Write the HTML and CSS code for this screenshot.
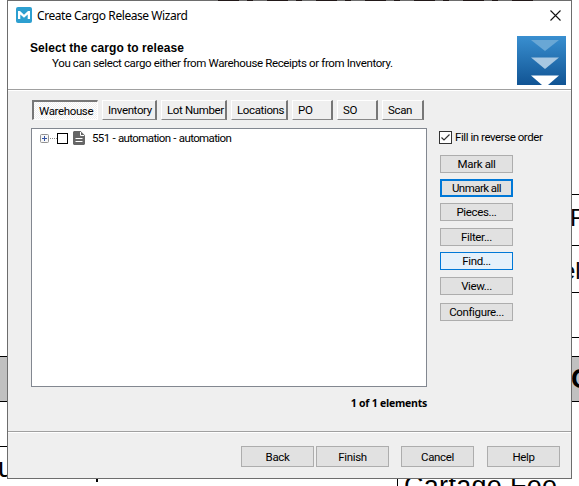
FILE: index.html
```html
<!DOCTYPE html>
<html lang="en">
<head>
<meta charset="utf-8">
<title>Create Cargo Release Wizard</title>
<link rel="stylesheet" href="styles.css">
</head>
<body>
<div class="backdrop" aria-hidden="true">
  <div class="rule r1"></div><div class="rule r2"></div><div class="rule r3"></div><div class="rule r4"></div>
  <div class="band"></div><div class="rule r5"></div><div class="divider"></div><div class="stem"></div>
  <span class="doc d1">F</span><span class="doc d2">el</span><span class="doc d3">C</span><span class="doc d4">u</span><span class="doc d5">Cartage Fee</span>
</div>
<main class="dialog">
  <header class="head">
    <div class="titlebar">
      <svg class="logo" width="16" height="16" viewBox="0 0 16 16"><rect width="16" height="16" rx="2" fill="#2d9fd0"/><path d="M2 12V4h2l4 3.700L12 4h2v8h-2.300V7.500L8 10.800 4.300 7.500V12z" fill="#fff"/></svg>
      <span class="title">Create Cargo Release Wizard</span>
      <svg class="close" width="11" height="11" viewBox="0 0 11 11"><path d="M.5.5l10 10M10.500.5l-10 10" stroke="#111" stroke-width="1.100"/></svg>
    </div>
    <div class="intro">
      <div class="copy"><h1><span>Select the cargo to release</span></h1><p><span>You can select cargo either from Warehouse Receipts or from Inventory.</span></p></div>
      <svg class="arrows" width="49" height="49" viewBox="0 0 49 49"><defs><linearGradient id="g" x2="0" y2="1"><stop stop-color="#398fd0"/><stop offset="1" stop-color="#115494"/></linearGradient></defs><rect width="49" height="49" fill="url(#g)"/><path d="M14 4h28L28 15z" fill="#69a7d5"/><path d="M14 21.500h28L28 33z" fill="#a8c8e2"/><path d="M14 39.500h28L31 49h-6z" fill="#fff"/></svg>
    </div>
  </header>
  <nav class="tabs">
    <button class="tab t1 active"><span>Warehouse</span></button><button class="tab t2"><span>Inventory</span></button><button class="tab t3"><span>Lot Number</span></button><button class="tab t4"><span>Locations</span></button><button class="tab t5"><span>PO</span></button><button class="tab t6"><span>SO</span></button><button class="tab t7"><span>Scan</span></button>
  </nav>
  <section class="work">
    <div class="left">
      <div class="tree"><div class="node">
        <svg class="expand" width="17" height="9" viewBox="0 0 17 9"><rect x=".5" y=".5" width="8" height="8" rx="1" fill="#f7f7f7" stroke="#929292"/><path d="M2 4.500h5M4.500 2v5" stroke="#3454a4"/><path d="M10 4.500h7" stroke="#888" stroke-dasharray="1 1"/></svg>
        <i class="box"></i>
        <svg class="file" width="12" height="14" viewBox="0 0 12 14"><path d="M1 0h6.500L12 4.500V13l-1 1H1l-1-1V1z" fill="#666"/><path d="M7.500 1v3.500H11M2.500 7.500h7M2.500 10.500h7" fill="none" stroke="#fff"/></svg>
        <span class="name">551 - automation - automation</span>
      </div></div>
      <div class="count"><span>1 of 1 elements</span></div>
    </div>
    <aside class="side">
      <label class="check"><svg width="13" height="13" viewBox="0 0 13 13"><rect x=".5" y=".5" width="12" height="12" fill="#fff" stroke="#333"/><path d="M2.500 6.500L5 9l5.500-5.500" fill="none" stroke="#333" stroke-width="1.200"/></svg><span>Fill in reverse order</span></label>
      <div class="actions">
        <button class="btn"><span>Mark all</span></button><button class="btn default"><span>Unmark all</span></button><button class="btn"><span>Pieces...</span></button><button class="btn down"><span>Filter...</span></button><button class="btn hover"><span>Find...</span></button><button class="btn down"><span>View...</span></button><button class="btn last"><span>Configure...</span></button>
      </div>
    </aside>
  </section>
  <footer class="foot"><button class="btn"><span>Back</span></button><button class="btn finish"><span>Finish</span></button><button class="btn cancel"><span>Cancel</span></button><button class="btn help"><span>Help</span></button></footer>
</main>
</body>
</html>
```
FILE: styles.css
```css
*{box-sizing:border-box}
body{margin:0;width:579px;height:486px;overflow:hidden;background:#fff;color:#000;font:11.5px/14px Roboto,"Liberation Sans",sans-serif;letter-spacing:-.36px}
span{white-space:nowrap}
button{font:inherit;letter-spacing:inherit;color:inherit;padding:0;margin:0;border-radius:0}
.backdrop{position:absolute;width:579px;height:486px;overflow:hidden}
.rule{position:absolute;height:1px;background:#000;left:571px;width:8px}
.r1{top:194px}.r2{top:245px}.r3{top:292px}.r4{top:337px}.r5{top:446px;left:0;width:8px}
.band{position:absolute;top:356px;width:579px;height:46px;background:#c0c0c0;border:solid #000;border-width:1px 0}
.divider{position:absolute;left:397px;top:446px;width:1px;height:40px;background:#000}
.stem{position:absolute;left:96px;top:478px;width:2px;height:4px;background:#000}
.doc{position:absolute;font:24px/28px "Liberation Sans",sans-serif;letter-spacing:0}
.d1{left:570px;top:204px}.d2{left:562px;top:257px}.d3{left:571px;top:365px;font-weight:bold;font-size:28px}.d4{left:-2px;top:454px;font-size:27px}.d5{left:404px;top:472px;font-size:27px;letter-spacing:.3px}
.dialog{position:relative;margin-left:7px;width:565px;height:479px;border:1px solid #6d6d6d;background:#efefef;display:flex;flex-direction:column}
.dialog::before{content:"";position:absolute;left:210px;top:-1px;width:320px;height:1px;background:repeating-linear-gradient(90deg,#211818 0 21px,#6d6d6d 21px 29px,#211818 29px 35px,#6d6d6d 35px 49px)}
.head{height:89px;background:#fff;border-bottom:1px solid #a0a0a0;flex:none}
.titlebar{height:28px;padding:0 10px 0 8px;display:flex;align-items:center}
.title{margin-left:5px;flex:1;padding-top:2px;font:12px/16px "Noto Sans",sans-serif;letter-spacing:-.43px}
.intro{display:flex;justify-content:space-between;padding:7px 5px 0 22px}
.copy h1{margin:5px 0 0;font:bold 12px/14px "Liberation Sans",sans-serif;letter-spacing:.07px}
.copy p{margin:1px 0 0 22px}
.arrows{display:block}
.tabs{display:flex;height:36px;padding:9px 0 0 24px;flex:none;border-top:1px solid #fff}
.tab{height:20px;text-align:left;padding:0 0 1px 5px;background:#efefef;border:solid;border-width:1px 2px 1px 1px;border-color:#fff #777 #888 #fff;margin-right:4px}
.active{padding-bottom:0;background:repeating-conic-gradient(#fff 0 25%,#efefef 0 50%) 0 0/2px 2px;border-width:2px 1px 1px 2px;border-color:#777 #fff #fff #777}
.t1{width:66px}.t2{width:55px}.t3{width:66px}.t4{width:57px}.t5,.t6{width:41px}.t7{width:42px}
.work{display:flex;height:305px;padding:2px 0 0 23px;flex:none}
.left{width:396px}
.tree{height:259px;background:#fff;border:1px solid #828790;padding:2px 0 0 8px}
.node{display:flex;height:14px;align-items:center}
.box{width:11px;height:11px;border:1px solid #000;margin-right:5px}
.name{margin-left:7px;letter-spacing:-.62px;word-spacing:.7px}
.count{text-align:right;font:bold 10.5px/14px "Open Sans",sans-serif;margin-top:9px;letter-spacing:-.22px}
.side{margin-left:12px;padding-top:2px}
.check{display:flex;align-items:center;height:14px;gap:3px;letter-spacing:-.44px}
.actions{padding:11px 0 0 1px;display:flex;flex-direction:column;gap:6px}
.btn{width:73px;height:18px;flex:none;background:#e1e1e1;border:1px solid #adadad;text-align:center;line-height:14px}
.default{border:2px solid #0078d7;letter-spacing:-.55px}.hover{background:#e5f1fb;border-color:#0078d7}.down{margin-top:1px}.last{margin-top:2px}
.foot{height:46px;border-top:1px solid #a0a0a0;box-shadow:inset 0 1px #fff;padding:14px 0 0 233px;display:flex}
.foot .btn{height:21px}.finish{margin-left:2px}.cancel{margin-left:12px}.help{margin-left:13px}
```
